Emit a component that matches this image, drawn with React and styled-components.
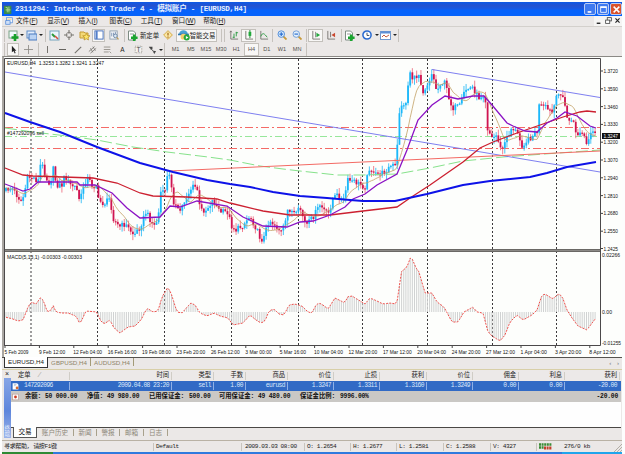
import React from "react";
import styled, { createGlobalStyle } from "styled-components";

const GlobalStyle = createGlobalStyle`
  * { box-sizing: border-box; }
  body { margin: 0; background: #fff; overflow: hidden; }
`;

const mono = `"Liberation Mono", "Noto Sans CJK SC", monospace`;
const sans = `"Liberation Sans", "Noto Sans CJK SC", sans-serif`;

const Screen = styled.div`
  width: 625px;
  height: 454px;
  padding: 2px 3px 0 2px;
  background: #fdfdfd;
  font-family: ${sans};
  color: #222;
  white-space: nowrap;
  overflow: hidden;
`;

const Window = styled.div`
  display: flex;
  flex-direction: column;
  height: 450px;
  background: #ebe8e7;
`;

const TitleBar = styled.div`
  display: flex;
  align-items: center;
  height: 14px;
  flex: none;
  padding: 0 0 0 2px;
  background: linear-gradient(#0c58e6, #2352d0 25%, #1659e4 50%, #0562fb 60%, #0562fb);
  color: #e8f0ff;
  font: bold 7.6px/14px ${mono};
  letter-spacing: -0.25px;
  white-space: pre;
`;

const TitleText = styled.span`
  flex: 1;
  padding-left: 2px;
`;

const TitleButton = styled.span`
  display: flex;
  align-items: center;
  justify-content: center;
  width: 12px;
  height: 12px;
  margin-left: 1px;
  border: 1px solid #b9cdf5;
  border-radius: 2px;
  background: ${(props) => (props.$close ? "#d9532c" : "#3f7af0")};
`;

const MenuBar = styled.div`
  display: flex;
  align-items: center;
  height: 11px;
  flex: none;
  padding-left: 3px;
  border-bottom: 1px solid #d3d0cc;
  font-size: 6.6px;
  line-height: 10px;
`;

const MenuItem = styled.span`
  width: 31.2px;
`;

const ChildButtons = styled.span`
  display: flex;
  margin-left: auto;
  height: 10px;
  background: #f6f5f4;
`;

const Toolbar = styled.div`
  display: flex;
  align-items: center;
  height: ${(props) => props.$h}px;
  flex: none;
`;

const Slot = styled.span`
  display: flex;
  flex: none;
  align-items: center;
  justify-content: center;
  width: ${(props) => props.$w}px;
  height: 13px;
  font-size: 6.4px;
  ${(props) => props.$on && "background: #f8f7f6; border: 1px solid #c3c0bb;"}
`;

const Divider = styled.i`
  flex: none;
  width: 1px;
  height: 13px;
  margin: 0 ${(props) => props.$r || 1}px 0 ${(props) => props.$l || 1}px;
  background: #c6c2bd;
`;

const Caret = styled.i`
  flex: none;
  width: ${(props) => props.$w || 5}px;
  height: 2px;
  &::after {
    content: "";
    display: block;
    width: 0;
    margin: 0 auto;
    border: 2px solid transparent;
    border-top-color: #222;
    border-bottom: 0;
  }
`;

const Period = styled.span`
  flex: none;
  width: 15.2px;
  height: 13px;
  text-align: center;
  font: 5.6px/13px ${sans};
  color: #55524e;
  ${(props) => props.$on && "background: #f8f7f6; box-shadow: inset 0 0 0 1px #c3c0bb;"}
`;

const ChartBox = styled.div`
  height: 301px;
  flex: none;
  border-top: 1px solid #8b8985;
  border-left: 2px solid #a9a6a2;
  background: #fdfefc;
  svg { display: block; overflow: visible; }
`;

const ChartTabs = styled.div`
  display: flex;
  height: 12px;
  flex: none;
  padding-left: 2px;
  border-top: 1px solid #55534f;
  font-size: 6.2px;
  line-height: 9px;
  color: #8d8468;
`;

const ChartTab = styled.span`
  width: ${(props) => props.$w}px;
  height: 8px;
  text-align: center;
  border-right: 1px solid #a39b78;
  ${(props) =>
    props.$on &&
    `margin-top: -1px; height: 11px; background: #fff; color: #222; border: 1px solid #333; border-top: 0;`}
`;

const TabArrows = styled.span`
  margin-left: auto;
  padding-right: 3px;
  color: #777;
  word-spacing: 4px;
`;

const Terminal = styled.div`
  display: flex;
  height: 71px;
  flex: none;
  border-top: 1px solid #d8cfa8;
`;

const Side = styled.div`
  display: flex;
  flex-direction: column;
  justify-content: space-between;
  align-items: center;
  width: 8px;
  height: 68px;
  margin-left: 1px;
  color: #222;
  font-size: 7px;
  line-height: 7px;
`;

const SideBar = styled.div`
  display: flex;
  align-items: flex-end;
  width: 7px;
  height: 60px;
  padding: 0 0 1px 1px;
  background: linear-gradient(#86a5e6, #5e86dc 55%, #9ab2e8);
  color: #e6eefd;
  font-size: 5.5px;
  line-height: 6px;
  white-space: normal;
`;

const TerminalBody = styled.div`
  display: flex;
  flex-direction: column;
  width: 610px;
`;

const Row = styled.div`
  display: flex;
  align-items: center;
  height: ${(props) => props.$h || 10}px;
  flex: none;
  font: 6.3px/10px ${mono};
  background: ${(props) => props.$bg || "#ece9e8"};
  color: ${(props) => props.$color || "#222"};
`;

const Cell = styled.span`
  display: flex;
  align-items: center;
  flex: none;
  justify-content: ${(props) => (props.$left ? "flex-start" : "flex-end")};
  width: ${(props) => props.$w}px;
  height: 8px;
  padding: 0 2px 0 ${(props) => (props.$left ? 7 : 0)}px;
  border-right: 1px solid ${(props) => props.$line || "#d0cdc6"};
  letter-spacing: ${(props) => (props.$num ? -0.58 : 0)}px;
`;

const SortMark = styled.i`
  margin-left: 7px;
  color: #aaa69c;
`;

const RowIcon = styled.i`
  display: flex;
  flex: none;
  width: 7px;
  height: 8px;
  margin: 0 ${(props) => props.$r}px 0 ${(props) => props.$l}px;
`;

const Sum = styled.b`
  flex: none;
  width: ${(props) => props.$w}px;
  letter-spacing: ${(props) => (props.$num ? -0.2 : 0)}px;
  text-align: ${(props) => (props.$right ? "right" : "left")};
`;

const Blank = styled.div`
  height: 26px;
  flex: none;
  background: #fefefe;
  border-bottom: 1px solid #4a4845;
`;

const BottomTabs = styled.div`
  display: flex;
  height: 12px;
  padding-left: 2px;
  font-size: 6.6px;
  line-height: 10px;
  color: #8d8779;
`;

const BottomTab = styled.span`
  width: ${(props) => props.$w}px;
  height: 7px;
  line-height: 8px;
  margin-top: 1px;
  text-align: center;
  border-right: 1px solid #a8a18c;
  ${(props) =>
    props.$on &&
    `height: 11px; margin-top: -1px; line-height: 10px; background: #fff; color: #111; border: 1px solid #555; border-top: 0;`}
`;

const StatusBar = styled.div`
  display: flex;
  align-items: center;
  height: 12px;
  flex: none;
  border-top: 1px solid #b9b2a5;
  font: 6.1px/10px ${mono};
  letter-spacing: -0.42px;
`;

const Status = styled.span`
  display: flex;
  align-items: center;
  flex: none;
  width: ${(props) => props.$w}px;
  height: 8px;
  padding-left: ${(props) => props.$pad || 2}px;
  border-right: 1px solid ${(props) => (props.$open ? "transparent" : "#c8c4bd")};
`;

const Grip = styled.svg`
  margin-left: auto;
  align-self: flex-end;
`;

const Taskbar = styled.div`
  display: flex;
  height: 2px;
  background: #2f7ade;
`;

const TaskPart = styled.i`
  width: ${(props) => props.$w}px;
  margin-left: ${(props) => (props.$end ? "auto" : 0)};
  background: ${(props) => props.$c};
`;

const art = {
  logo: <><rect x="0" y="1" width="9" height="10" fill="#3b8a4b" /><path d="M2 3h2v6M6 2v7M2 6h6" stroke="#bfe39b" fill="none" /></>,
  doc: <><rect x="2" y="1" width="8" height="7" fill="#fff" stroke="#4c86d8" /><rect x="1" y="5" width="6" height="5" fill="#cfe0f8" stroke="#4c86d8" /><path d="M3 3h6" stroke="#e7b64b" /></>,
  add: <><rect x="1" y="1" width="8" height="7" fill="#f2f8fd" stroke="#7aa386" /><path d="M7 4v7M3.5 7.5h7" stroke="#16a02a" strokeWidth="2.6" /></>,
  profile: <><rect x="1" y="1" width="8" height="7" fill="#e4eefc" stroke="#5c89c5" /><rect x="3" y="4" width="8" height="6" fill="#b9d2f3" stroke="#4b7bc0" /></>,
  watch: <><rect x="1" y="1" width="9" height="9" fill="#eaf4fb" stroke="#75a3bd" /><path d="M3 4l3 3" stroke="#2b9a3b" strokeWidth="2" /><path d="M6 6l3 3" stroke="#d44c3b" strokeWidth="1.6" /></>,
  target: <><circle cx="5.5" cy="5.5" r="3" fill="none" stroke="#8a8782" /><path d="M5.5 0v4M5.5 7v4M0 5.5h4M7 5.5h4" stroke="#77746f" strokeWidth="1.2" /></>,
  star: <><path d="M1 2h4l1 1h3v5H1z" fill="#f3d978" stroke="#c49b35" /><path d="M7.5 3.5l1 2 2.5.3-2 1.6.5 2.6-2.2-1.2L5 10l.6-2.6-1.9-1.6 2.6-.3z" fill="#fbe46b" stroke="#b88d22" strokeWidth=".7" /></>,
  panel: <><rect x="1" y="1" width="9" height="9" fill="#fff" stroke="#3c69b8" /><path d="M3 1v9" stroke="#547fcb" strokeWidth="2" /></>,
  tester: <><rect x="1" y="1" width="8" height="9" fill="#f2f4f7" stroke="#8fa0b0" /><path d="M3 7V3M5 6V3M7 7V2" stroke="#7a92b5" /><circle cx="7" cy="6.5" r="2" fill="#dbe9f6" stroke="#6d87a5" /><path d="M8.5 8l2 2.4" stroke="#bb9b59" strokeWidth="1.3" /></>,
  order: <><path d="M1.5 1h5l2 2v7h-7z" fill="#fff" stroke="#7d8c83" /><path d="M3 4h4" stroke="#999" /><path d="M7.2 4.5v6.5M4 7.8h6.6" stroke="#19a52e" strokeWidth="2.6" /></>,
  diamond: <><path d="M5.5.7l4.8 4.8-4.8 4.8L.7 5.5z" fill="#fae7a5" stroke="#d1a33c" /><path d="M5.5 3v3M5.5 7.2v1.3" stroke="#a66b1d" strokeWidth="1.4" /></>,
  expert: <><path d="M1 5c0-5 8-5 8 0z" fill="#4aa1d5" /><path d="M0 5h10" stroke="#2f78ae" strokeWidth="1.5" /><circle cx="5" cy="7" r="2.6" fill="#f2ce70" /><circle cx="8" cy="7.8" r="2.8" fill="#27a83c" /><path d="M7.2 6.4l2.4 1.4-2.4 1.4z" fill="#fff" /></>,
  bars: <><path d="M2 1v9h8M1 2.5L2 1l1 1.5" fill="none" stroke="#77746f" /><path d="M5.5 4v5M8 2v5M4 8h2M7.5 3h2.5" stroke="#2c9b42" /></>,
  candle: <><path d="M2 1v9h8" fill="none" stroke="#77746f" /><path d="M6.5 0v9" stroke="#168a2c" /><rect x="5" y="2" width="3" height="4.5" fill="#20a83a" /></>,
  line: <><path d="M2 1v9h8" fill="none" stroke="#77746f" /><path d="M2 7c2-5 4-3 7 1" fill="none" stroke="#2c9b42" /></>,
  zoomIn: <><path d="M7 7l3.5 3.5" stroke="#c79a3b" strokeWidth="2" /><circle cx="4.7" cy="4.5" r="3.6" fill="#d7ebfd" stroke="#4a87d6" /><path d="M4.7 2.5v4M2.7 4.5h4" stroke="#2c6fd0" strokeWidth="1.3" /></>,
  zoomOut: <><path d="M7 7l3.5 3.5" stroke="#c79a3b" strokeWidth="2" /><circle cx="4.7" cy="4.5" r="3.6" fill="#e2effb" stroke="#6d9bd6" /><path d="M2.7 4.5h4" stroke="#2c6fd0" strokeWidth="1.3" /></>,
  scroll: <><path d="M2 1v9h8" fill="none" stroke="#77746f" /><path d="M5 2v6" stroke="#888" /><path d="M6 3l4 2.5L6 8z" fill="#22a63b" /></>,
  shift: <><path d="M2 1v9h8M5 2v6" fill="none" stroke="#77746f" /><path d="M10 3L6 5.5 10 8z" fill="#c9472f" /></>,
  clock: <><circle cx="5.5" cy="5.5" r="4.5" fill="#fff" stroke="#2b6bd0" strokeWidth="1.7" /><path d="M5.5 3v3H8" fill="none" stroke="#345" /></>,
  template: <><rect x=".5" y="1.5" width="10" height="8" fill="#fff" stroke="#6f98cf" /><path d="M1 2.5h9" stroke="#5d8fd6" strokeWidth="2" /><path d="M2 7l2-2 2 2 3-2" fill="none" stroke="#c45d42" /></>,
  cursor: <path d="M3.5 1v8l2-1.7L7 10.5l1.2-.6-1.5-3H9z" fill="#222" />,
  cross: <path d="M5.5 0v11M0 5.5h11" stroke="#8b8883" />,
  vline: <path d="M5.5 2v7" stroke="#77746f" />,
  hline: <path d="M2 5.5h7" stroke="#66635e" />,
  slash: <path d="M2 9l7-7" stroke="#77746f" strokeWidth="1.2" />,
  channel: <path d="M1 8l7-6M3 10l7-6M3 4l3 5M6 2l3 5" stroke="#77746f" />,
  fib: <path d="M1 2.5h8M1 5.5h8M1 8.5h6M8 8l2 2" stroke="#8b877f" />,
  arrows: <><path d="M2 2h4v3H4zM6 6l4 1-2 3z" fill="#444" /><path d="M3 3l5 5" stroke="#666" /></>,
  textbox: <rect x="1.5" y="1.5" width="8" height="8" fill="#f4f2ef" stroke="#88857e" strokeDasharray="1 1" />,
  ticket: <><path d="M1 1h7l2 2v8H1z" fill="#fff" /><path d="M3 3h4M3 5h3" stroke="#9ab" /><circle cx="8" cy="8.5" r="2.2" fill="#d66a32" /></>,
  dot: <><rect x="1" y="1" width="9" height="9" fill="#fff" stroke="#bb9a92" /><circle cx="5.5" cy="5.5" r="2.2" fill="#cc3a22" /></>,
  min: <path d="M2 8.5h4.5" stroke="#fff" strokeWidth="2" />,
  max: <><path d="M2 3h7v6H2z" fill="none" stroke="#fff" /><path d="M1.5 2.5h8" stroke="#fff" strokeWidth="2" /></>,
  close: <path d="M2 2l7 7M9 2l-7 7" stroke="#fff" strokeWidth="1.8" />,
  mdiMin: <path d="M3 8h4" stroke="#222" strokeWidth="1.5" />,
  mdiMax: <><rect x="4" y="2" width="5" height="4" fill="none" stroke="#444" /><rect x="2" y="5" width="5" height="4" fill="#fff" stroke="#444" /></>,
  mdiClose: <path d="M3 3l5 5M8 3l-5 5" stroke="#222" strokeWidth="1.4" />,
};

function Icon({ name, size = 11 }) {
  return (
    <svg width={size} height={size} viewBox="0 0 11 11">
      {art[name]}
    </svg>
  );
}

const menus = [["文件", "F"], ["显示", "V"], ["插入", "I"], ["图表", "C"], ["工具", "T"], ["窗口", "W"], ["帮助", "H"]];
const periods = ["M1", "M5", "M15", "M30", "H1", "H4", "D1", "W1", "MN"];

// [x, y] points in chart pixels, linearly interpolated bar by bar
const closes = [[5,190],[12,188],[18,197],[22,202],[28,177],[34,178],[38,182],[41,161],[46,178],[50,184],[54,166],[56,185],[62,185],[65,175],[70,185],[76,187],[80,202],[84,183],[88,178],[93,187],[97,184],[98,200],[104,204],[110,198],[113,218],[119,227],[125,224],[134,235],[140,227],[146,212],[154,226],[158,219],[161,190],[164,195],[168,173],[171,180],[173,200],[179,213],[186,198],[192,187],[197,187],[200,210],[206,210],[213,200],[220,212],[228,212],[231,225],[236,230],[243,225],[250,216],[256,228],[261,240],[264,237],[269,220],[275,225],[281,232],[286,222],[288,208],[296,215],[300,208],[306,226],[313,217],[320,205],[328,215],[333,198],[338,195],[343,202],[348,180],[355,182],[365,187],[370,165],[373,175],[383,173],[392,165],[396,167],[400,103],[405,108],[410,71],[413,80],[420,73],[422,93],[427,85],[432,73],[437,92],[440,83],[445,83],[452,108],[460,106],[465,90],[473,87],[478,98],[485,93],[487,127],[492,138],[497,135],[501,151],[507,138],[512,127],[517,133],[522,145],[530,138],[537,132],[539,106],[545,107],[552,113],[557,97],[561,92],[563,97],[567,118],[573,122],[577,135],[583,133],[587,146],[592,132],[596,135]];
const macd = [[5,317],[13,319],[18,321],[23,320],[28,307],[31,302],[36,304],[41,297],[44,302],[47,311],[50,312],[53,305],[56,312],[62,313],[68,313],[73,315],[76,316],[80,324],[86,311],[97,312],[100,320],[104,324],[110,320],[114,328],[120,333],[128,327],[135,326],[141,320],[147,308],[153,312],[158,311],[162,297],[168,287],[171,293],[177,312],[182,313],[188,306],[191,303],[195,305],[200,313],[207,316],[214,313],[220,316],[228,318],[233,325],[243,323],[250,315],[256,320],[261,323],[265,321],[269,311],[274,309],[279,314],[284,315],[289,305],[295,304],[302,306],[308,312],[312,313],[316,305],[319,303],[323,305],[328,309],[335,298],[345,303],[347,297],[352,296],[365,304],[370,298],[377,301],[383,304],[390,303],[396,304],[398,298],[401,272],[407,267],[411,256],[416,268],[419,272],[425,293],[432,293],[437,302],[444,307],[452,322],[458,322],[464,312],[473,307],[477,312],[483,313],[488,332],[492,336],[500,341],[505,335],[510,322],[517,315],[523,320],[532,315],[537,310],[542,295],[545,294],[553,299],[558,294],[562,296],[567,310],[572,318],[578,326],[587,330],[592,323],[596,318]];

const maBlue = "5,113 30,122 60,132 97,147 140,163 173,172 207,180 230,184 250,187 273,192 300,196 327,198 350,200 363,201 395,201 427,194 463,185 490,181 530,177 547,173 567,167 596,162";
const maRed = "5,168 23,175 33,176 93,178 117,183 140,193 153,196 187,197 217,199 230,203 263,211 290,215 330,215 363,211 397,207 410,198 430,185 463,162 480,148 493,142 517,133 543,124 563,117 580,112 587,111 596,112";
const maPurple = "5,184 13,187 23,191 30,189 38,182 50,182 77,182 80,185 95,185 112,193 127,208 140,218 160,217 170,206 180,207 197,201 227,206 243,217 263,226 287,227 300,222 313,221 330,215 345,207 353,199 365,194 377,185 397,174 407,150 418,120 432,105 445,96 458,99 473,96 484,96 492,105 507,123 513,126 525,131 537,132 547,123 557,118 565,112 577,116 590,126 596,128";
const maGreen = "5,128 33,132 67,136 97,140 133,147 167,152 208,157 230,160 260,166 283,169 300,171 337,175 363,175 397,174 430,168 463,161 503,157 600,150";

const weeks = [31, 97.5, 164.5, 231.5, 298.5, 362.5, 427.5, 492.5, 556.5];
const prices = ["1.3720", "1.3590", "1.3460", "1.3330", "1.3200", "1.3070", "1.2940", "1.2810", "1.2680", "1.2550", "1.2425"];
const dates = ["5 Feb 2009", "9 Feb 12:00", "12 Feb 04:00", "16 Feb 16:00", "19 Feb 08:00", "23 Feb 20:00", "26 Feb 12:00", "3 Mar 00:00", "5 Mar 16:00", "10 Mar 04:00", "12 Mar 20:00", "17 Mar 12:00", "20 Mar 04:00", "24 Mar 20:00", "27 Mar 12:00", "1 Apr 04:00", "3 Apr 20:00", "8 Apr 12:00"];

function at(points, x) {
  let i = 1;
  while (i < points.length - 1 && points[i][0] < x) i++;
  const [x0, y0] = points[i - 1];
  const [x1, y1] = points[i];
  return y0 + ((y1 - y0) * (x - x0)) / (x1 - x0);
}

const wobble = (i, k) => {
  const v = Math.sin(i * 12.9898 + k * 78.233) * 43758.5453;
  return v - Math.floor(v);
};

const xs = Array.from({ length: 275 }, (_, i) => 6 + i * 2.15);
const series = xs.map((x, i) => at(closes, x) + (wobble(i, 1) - 0.5) * 6);
const fast = xs.map((x, i) => {
  const part = series.slice(Math.max(0, i - 8), i + 1);
  return `${x.toFixed(1)},${(part.reduce((a, b) => a + b, 0) / part.length).toFixed(1)}`;
}).join(" ");

const Caption = styled.text`
  font: 5.5px ${sans};
  fill: ${(props) => props.$fill || "#111"};
`;

// fits the glyphs to the given width
function Label({ w, children, ...rest }) {
  return <Caption textLength={w} lengthAdjust="spacingAndGlyphs" {...rest}>{children}</Caption>;
}

function Candles() {
  return xs.map((x, i) => {
    const open = i ? series[i - 1] : series[0] + 3;
    const close = series[i];
    const up = close < open;
    const top = Math.min(open, close);
    const h = Math.max(1.2, Math.abs(open - close));
    return (
      <g key={i}>
        <path
          d={`M${x} ${top - wobble(i, 2) * 6}V${top + h + wobble(i, 3) * 6}`}
          stroke={up ? "#39bdf4" : "#ee7486"}
          strokeWidth="0.9"
        />
        <rect x={x - 0.9} y={top} width="1.8" height={h} fill={up ? "#1cb8fa" : "#cf1452"} />
      </g>
    );
  });
}

function Chart() {
  return (
    <svg width="618" height="300" viewBox="4 57 618 300">
      <g fill="none" stroke="#3c3a3c" strokeWidth="1" strokeDasharray="2 2">
        {weeks.map((x) => <path key={x} d={`M${x} 59V345`} />)}
      </g>
      <g fill="none">
        <path d="M5 127.5H600M5 148.5H600" stroke="#f46a66" strokeDasharray="8 3 2 3" />
        <path d="M5 136.5H600" stroke="#97e79b" strokeDasharray="7 3 2 3" />
        <Candles />
        <polyline points={maGreen} stroke="#86e28b" strokeDasharray="12 4" />
        <polyline points={fast} stroke="#c3a166" strokeWidth="0.8" />
        <path d="M5 72L600 172M432 69.5L600 97.5" stroke="#6f70ee" strokeWidth="0.9" />
        <path d="M170 171L600 151" stroke="#f36a64" />
        <polyline points={maRed} stroke="#cc2030" strokeWidth="1.3" />
        <polyline points={maPurple} stroke="#8b12c4" strokeWidth="1.3" />
        <polyline points={maBlue} stroke="#0d12e8" strokeWidth="1.9" strokeLinejoin="round" />
      </g>
      <Label x="7" y="64.5" w="97">EURUSD,H4&nbsp; 1.3253 1.3282 1.3241 1.3247</Label>
      <Label x="7" y="135" w="37">#147292096 sell</Label>

      <g stroke="#d0d2d2" strokeWidth="1">
        {xs.map((x) => <path key={x} d={`M${x} 312V${at(macd, x)}`} />)}
      </g>
      <polyline
        points={xs.map((x) => `${x},${at(macd, x)}`).join(" ")}
        fill="none" stroke="#f0504c" strokeWidth="1" strokeDasharray="2 1.2"
      />
      <Label x="7" y="258.5" w="75">MACD(5,13,1) -0.00303 -0.00303</Label>

      <rect x="4" y="249" width="597" height="3" fill="#8b8986" />
      <path d="M4 249.5H601M4 251.5H601" stroke="#6a6865" />
      <path d="M4.5 345.5V58.5H600.5V345.5H4" fill="none" stroke="#4b494a" />

      {prices.map((p, i) => {
        const y = i === 10 ? 248.5 : 71 + i * 17.8;
        return (
          <g key={p}>
            <path d={`M601 ${y}h2`} stroke="#444" />
            <Label x="603.5" y={y + 2} w="14.5">{p}</Label>
          </g>
        );
      })}
      <rect x="602" y="133" width="18" height="6" fill="#111" />
      <Label x="603.5" y="138" w="14.5" $fill="#fff">1.3247</Label>
      <Label x="602" y="257" w="18">0.02266</Label>
      <Label x="602" y="313.5" w="10">0.00</Label>
      <Label x="602" y="344.5" w="19">-0.01255</Label>
      {dates.map((d, i) => (
        <g key={d}>
          <path d={`M${5 + i * 34.4} 346v2`} stroke="#444" />
          <Label x={4.5 + i * 34.4} y="353.5" w={d.length * 2.4}>{d}</Label>
        </g>
      ))}
    </svg>
  );
}

const columns = [
  ["定单", "147292096", 59], ["时间", "2009.04.08 23:20", 102], ["类型", "sell", 42], ["手数", "1.00", 32],
  ["商品", "eurusd", 42], ["价位", "1.3247", 46], ["止损", "1.3311", 46], ["获利", "1.3160", 47],
  ["价位", "1.3249", 46], ["佣金", "0.00", 46], ["利息", "0.00", 46], ["获利", "-20.00", 55],
];

const sums = [["余额:", 20, "50 000.00", 42], ["净值:", 20, "49 980.00", 42], ["已用保证金:", 40, "500.00", 30], ["可用保证金:", 39, "49 480.00", 42], ["保证金比例:", 40, "9996.00%", 34]];

const bottomTabs = [["交易", 24], ["账户历史", 37], ["新闻", 23], ["警报", 23], ["邮箱", 24], ["日志", 24]];

export default function App() {
  return (
    <Screen>
      <GlobalStyle />
      <Window>
        <TitleBar>
          <Icon name="logo" size={9} />
          <TitleText>2311294: Interbank FX Trader 4 - 模拟账户 - [EURUSD,H4]</TitleText>
          <TitleButton><Icon name="min" size={9} /></TitleButton>
          <TitleButton><Icon name="max" size={9} /></TitleButton>
          <TitleButton $close><Icon name="close" size={9} /></TitleButton>
        </TitleBar>

        <MenuBar>
          <Icon name="doc" size={8} />
          <Slot $w={3} />
          {menus.map(([name, key]) => (
            <MenuItem key={key}>{name}(<u>{key}</u>)</MenuItem>
          ))}
          <ChildButtons>
            <Icon name="mdiMin" size={10} />
            <Icon name="mdiMax" size={9} />
            <Icon name="mdiClose" size={9} />
          </ChildButtons>
        </MenuBar>

        <Toolbar $h={16}>
          <Divider $l={2} $r={3} />
          <Slot $w={11}><Icon name="add" /></Slot>
          <Caret />
          <Slot $w={14}><Icon name="profile" /></Slot>
          <Caret />
          <Divider $l={2} />
          <Slot $w={14}><Icon name="watch" /></Slot>
          <Slot $w={16}><Icon name="target" size={10} /></Slot>
          <Slot $w={15}><Icon name="star" /></Slot>
          <Slot $w={13} $on><Icon name="panel" size={10} /></Slot>
          <Slot $w={18}><Icon name="tester" size={10} /></Slot>
          <Divider />
          <Slot $w={13}><Icon name="order" /></Slot>
          <Slot $w={21}>新定单</Slot>
          <Slot $w={16}><Icon name="diamond" size={10} /></Slot>
          <Slot $w={41} $on><Icon name="expert" size={12} />智能交易</Slot>
          <Divider $l={4} />
          <Divider />
          <Slot $w={15}><Icon name="bars" size={10} /></Slot>
          <Slot $w={15} $on><Icon name="candle" size={10} /></Slot>
          <Slot $w={15}><Icon name="line" size={10} /></Slot>
          <Divider />
          <Slot $w={15}><Icon name="zoomIn" size={10} /></Slot>
          <Slot $w={16}><Icon name="zoomOut" size={10} /></Slot>
          <Divider />
          <Slot $w={15} $on><Icon name="scroll" size={10} /></Slot>
          <Slot $w={16}><Icon name="shift" size={10} /></Slot>
          <Divider $l={2} />
          <Slot $w={12}><Icon name="order" /></Slot>
          <Caret />
          <Slot $w={14}><Icon name="clock" size={10} /></Slot>
          <Caret />
          <Slot $w={13}><Icon name="template" /></Slot>
          <Caret />
          <Divider />
        </Toolbar>

        <Toolbar $h={13}>
          <Divider $l={2} $r={2} />
          <Slot $w={12} $on><Icon name="cursor" size={9} /></Slot>
          <Slot $w={18}><Icon name="cross" size={9} /></Slot>
          <Divider />
          <Slot $w={14}><Icon name="vline" size={11} /></Slot>
          <Slot $w={16}><Icon name="hline" size={11} /></Slot>
          <Slot $w={15}><Icon name="slash" size={10} /></Slot>
          <Slot $w={15}><Icon name="channel" size={9} /></Slot>
          <Slot $w={15}><Icon name="fib" size={9} /></Slot>
          <Slot $w={15}>A</Slot>
          <Slot $w={16}>
            <svg width="9" height="9" viewBox="0 0 11 11">
              {art.textbox}
              <text x="3" y="8.3" fontSize="8" fill="#444">T</text>
            </svg>
          </Slot>
          <Slot $w={12}><Icon name="arrows" size={10} /></Slot>
          <Caret />
          <Divider $r={3} />
          {periods.map((p) => <Period key={p} $on={p === "H4"}>{p}</Period>)}
          <Divider />
        </Toolbar>

        <ChartBox><Chart /></ChartBox>

        <ChartTabs>
          <ChartTab $w={44} $on>EURUSD,H4</ChartTab>
          <ChartTab $w={43}>GBPUSD,H4</ChartTab>
          <ChartTab $w={43}>AUDUSD,H4</ChartTab>
          <TabArrows>‹ ›</TabArrows>
        </ChartTabs>

        <Terminal>
          <Side>
            ×
            <SideBar>终 端</SideBar>
          </Side>
          <TerminalBody>
            <Row $h={11}>
              {columns.map(([head, , w], i) => (
                <Cell key={i} $w={w} $left={i === 0}>
                  {head}
                  {i === 0 && <SortMark>/</SortMark>}
                </Cell>
              ))}
            </Row>
            <Row $bg="#316ac5" $color="#dbe7fb">
              {columns.map(([head, value, w], i) => (
                <Cell key={i} $w={w} $num $line={i === 11 ? "transparent" : "#8fb0e6"} $left={i === 0}>
                  {i === 0 && <RowIcon $l={-6} $r={5}><Icon name="ticket" size={8} /></RowIcon>}
                  {value}
                </Cell>
              ))}
            </Row>
            <Row $h={11} $bg="#cac8c5" $color="#111">
              <RowIcon $l={1} $r={6}><Icon name="dot" size={8} /></RowIcon>
              {sums.map(([label, lw, value, vw]) => (
                <React.Fragment key={label}>
                  <Sum $w={lw}>{label}</Sum>
                  <Sum $w={vw} $num>{value}</Sum>
                </React.Fragment>
              ))}
              <Sum $w={244} $num $right>-20.00</Sum>
            </Row>
            <Blank />
            <BottomTabs>
              {bottomTabs.map(([name, w], i) => <BottomTab key={name} $w={w} $on={i === 0}>{name}</BottomTab>)}
            </BottomTabs>
          </TerminalBody>
        </Terminal>

        <StatusBar>
          <Status $w={152}>寻求帮助, 请按F1键</Status>
          <Status $w={88}>Default</Status>
          <Status $w={63} $pad={3}>2009.03.03 08:00</Status>
          <Status $w={46}>O: 1.2654</Status>
          <Status $w={46}>H: 1.2677</Status>
          <Status $w={47}>L: 1.2581</Status>
          <Status $w={47}>C: 1.2588</Status>
          <Status $w={46}>V: 4327</Status>
          <Status $w={27} $pad={2} $open>
            <svg width="13" height="7" viewBox="0 0 13 7">
              <path d="M0 1.5h13M0 4.5h5" stroke="#3a8b35" strokeWidth="2.5" strokeDasharray="2 .6" />
              <path d="M5 5h8" stroke="#c33f2a" strokeWidth="3" strokeDasharray="2 .6" />
            </svg>
          </Status>
          <span>276/0 kb</span>
          <Grip width="8" height="8" viewBox="0 0 8 8">
            <path d="M0 8l8-8M3 8l5-5M6 8l2-2" stroke="#b3aea6" />
          </Grip>
        </StatusBar>
      </Window>
      <Taskbar>
        <TaskPart $w={51} $c="#2f8a34" />
        <TaskPart $w={60} $c="#20a5ec" $end />
      </Taskbar>
    </Screen>
  );
}
